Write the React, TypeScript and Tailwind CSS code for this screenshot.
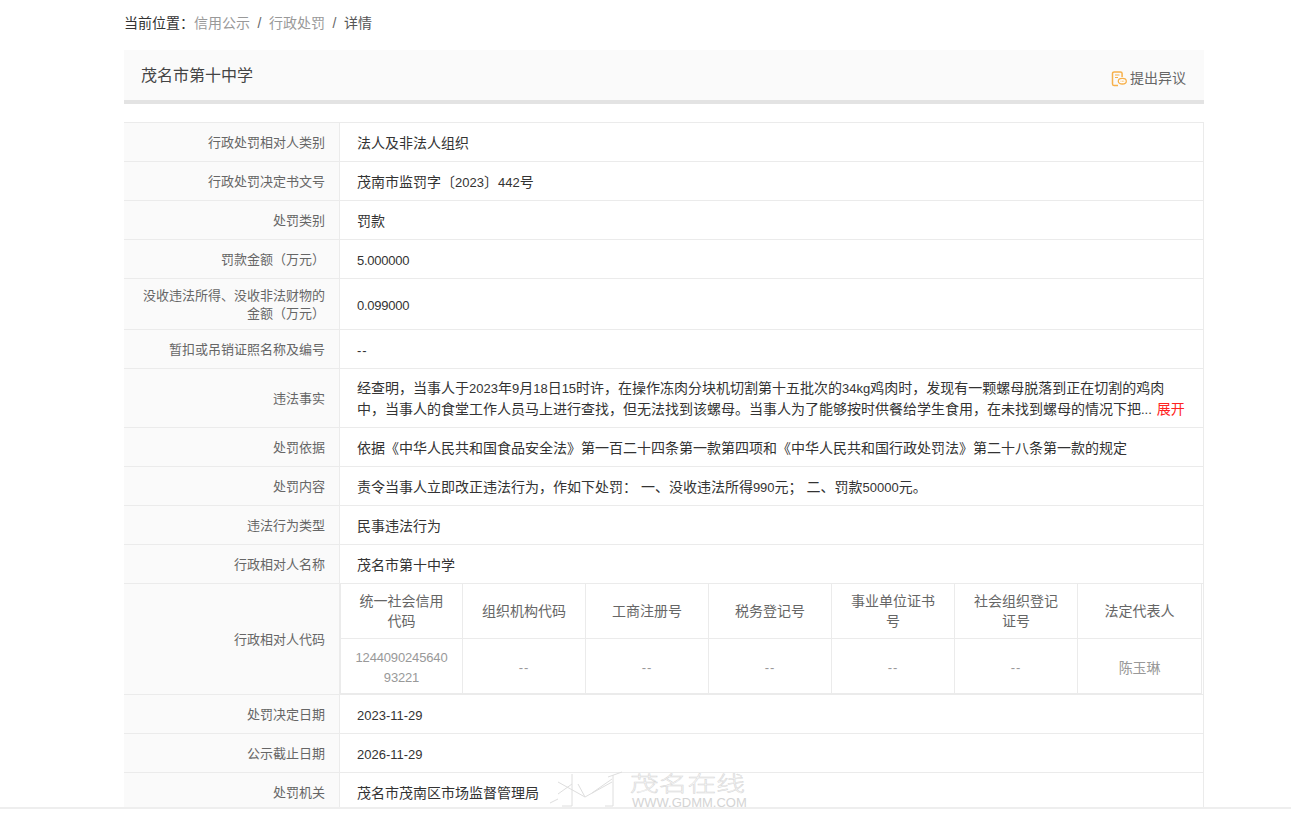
const rowsA: [string, string, string][] = [
  ["行政处罚相对人类别", "法人及非法人组织", "h-[39px]"],
  ["行政处罚决定书文号", "茂南市监罚字〔2023〕442号", "h-[39px]"],
  ["处罚类别", "罚款", "h-[39px]"],
  ["罚款金额（万元）", "5.000000", "h-[39px]"],
  ["没收违法所得、没收非法财物的金额（万元）", "0.099000", "h-[51px]"],
  ["暂扣或吊销证照名称及编号", "--", "h-[39px]"],
];
const rowsB: [string, string][] = [
  ["处罚依据", "依据《中华人民共和国食品安全法》第一百二十四条第一款第四项和《中华人民共和国行政处罚法》第二十八条第一款的规定"],
  ["处罚内容", "责令当事人立即改正违法行为，作如下处罚： 一、没收违法所得990元； 二、罚款50000元。"],
  ["违法行为类型", "民事违法行为"],
  ["行政相对人名称", "茂名市第十中学"],
];
const rowsC: [string, string][] = [
  ["处罚决定日期", "2023-11-29"],
  ["公示截止日期", "2026-11-29"],
  ["处罚机关", "茂名市茂南区市场监督管理局"],
];
const heads = ["统一社会信用代码", "组织机构代码", "工商注册号", "税务登记号", "事业单位证书号", "社会组织登记证号", "法定代表人"];
const vals = ["124409024564093221", "--", "--", "--", "--", "--", "陈玉琳"];

function T({ s }: { s: string }) {
  const parts = s.split(/([0-9A-Za-z.\-]+)/);
  return (
    <>
      {parts.map((p, i) => {
        if (i % 2 === 0) return <span key={i}>{p}</span>;
        let cls = "text-[13px]";
        if (p.includes(".")) cls = "text-[13px] tracking-[-0.25px]";
        if (p === "--") cls = "text-[13px] tracking-[1px]";
        return <span key={i} className={cls}>{p}</span>;
      })}
    </>
  );
}

function Row({ label, cls, children }: { label: string; cls: string; children: React.ReactNode }) {
  return (
    <div className={`flex border-b border-[#ebebeb] ${cls}`}>
      <div className="w-[216px] shrink-0 bg-[#fafafa] border-r border-[#ebebeb] flex items-center justify-end text-right pl-4 pr-[14px] pt-[2px] text-[13px] leading-[18px] text-[#666]">
        <span>{label}</span>
      </div>
      <div className="flex-1 min-w-0 flex items-center pl-[17px] pr-4 pt-[2px] text-[14px] leading-[20px] text-[#333]">{children}</div>
    </div>
  );
}

export default function App() {
  return (
    <div className="relative h-[814px] w-[1291px] overflow-hidden bg-white font-['Liberation_Sans','Noto_Sans_CJK_SC',sans-serif]">
      <div className="ml-[124px] w-[1080px]">
        <div className="h-[50px] pt-[13px] text-[14px] leading-[20px] flex">
          <span className="text-[#333] w-[70px]">当前位置：</span>
          <span className="text-[#999]">信用公示</span>
          <span className="text-[#666] w-[19px] text-center">/</span>
          <span className="text-[#999]">行政处罚</span>
          <span className="text-[#666] w-[19px] text-center">/</span>
          <span className="text-[#555]">详情</span>
        </div>
        <div className="h-[54px] bg-[#fafafa] border-b-4 border-[#e3e3e3] flex items-center justify-between pl-[17px] pr-[18px]">
          <span className="text-[16px] text-[#444] mt-[2px]">茂名市第十中学</span>
          <span className="flex items-center gap-[3px] text-[14px] text-[#666] mt-[7px]">
            <svg width="16" height="16" viewBox="0 0 16 16" fill="none" stroke="#f7b04a" strokeWidth="1.5">
              <path d="M7 14.6H3.2A1.7 1.7 0 0 1 1.5 13V2.6A1.7 1.7 0 0 1 3.2.9h6.2a1.7 1.7 0 0 1 1.7 1.7V6" />
              <path d="M4 4h4.5M4 6.5h3" strokeWidth="1" />
              <ellipse cx="11.3" cy="10.2" rx="4" ry="2.8" fill="#fff" strokeWidth="1.3" />
              <path d="M9.6 10.2h.8M11 10.2h.8M12.4 10.2h.8" strokeWidth="1" />
            </svg>
            提出异议
          </span>
        </div>
        <div className="mt-[18px] border-r border-t border-[#ebebeb]">
          {rowsA.map(([l, v, c]) => (
            <Row key={l} label={l} cls={c}><span><T s={v} /></span></Row>
          ))}
          <Row label="违法事实" cls="h-[59px]">
            <div>
              <T s="经查明，当事人于2023年9月18日15时许，在操作冻肉分块机切割第十五批次的34kg鸡肉时，发现有一颗螺母脱落到正在切割的鸡肉" />
              <br />
              <T s="中，当事人的食堂工作人员马上进行查找，但无法找到该螺母。当事人为了能够按时供餐给学生食用，在未找到螺母的情况下把" />
              <span className="text-[13px]">...</span> <span className="text-[#f22] ml-px">展开</span>
            </div>
          </Row>
          {rowsB.map(([l, v]) => (
            <Row key={l} label={l} cls="h-[39px]"><span><T s={v} /></span></Row>
          ))}
          <div className="flex border-b border-[#ebebeb] h-[111px]">
            <div className="w-[216px] shrink-0 bg-[#fafafa] border-r border-[#ebebeb] flex items-center justify-end pr-[14px] pt-[2px] text-[13px] text-[#666]">行政相对人代码</div>
            <div className="flex-1 min-w-0">
              <div className="grid grid-cols-[122px_repeat(5,123px)_124px] w-[862px] border-l border-b border-[#ebebeb]">
                {heads.map((h) => (
                  <div key={h} className="h-[55px] border-r border-b border-[#ebebeb] flex items-center justify-center text-center px-[15px] text-[14px] leading-[20px] text-[#666]">{h}</div>
                ))}
                {vals.map((v, i) => (
                  <div key={i} className="h-[54px] border-r border-[#ebebeb] flex items-center justify-center text-center px-[14px] pt-[3px] text-[13px] tracking-[-0.15px] leading-[20px] text-[#999] break-all">
                    {v === "陈玉琳" ? <span className="text-[14px]">{v}</span> : v === "--" ? <span className="tracking-[1px]">{v}</span> : v}
                  </div>
                ))}
              </div>
            </div>
          </div>
          {rowsC.map(([l, v]) => (
            <Row key={l} label={l} cls="h-[39px]"><span><T s={v} /></span></Row>
          ))}
        </div>
      </div>
      <div className="absolute left-0 right-0 top-[807px] h-[7px] bg-white border-t-2 border-[#eeeeee]" />
      <div className="absolute left-[548px] top-[770px] w-[200px] h-[44px] pointer-events-none">
        <svg className="absolute left-0 top-0" width="76" height="40" viewBox="0 0 76 40" fill="none" stroke="#dedede" strokeWidth="1">
          <path d="M24 4v32M65 5v31M10 12l27 15 27-15M24 14L10 24M37 27l-7-13M44 23l20-14M60 7l14-5M2 33l8-4M14 36h10M65 36h-8" />
        </svg>
        <span className="absolute left-[82px] top-[1px] text-[21px] leading-[26px] font-light text-white [-webkit-text-stroke:0.5px_#d6d6d6] whitespace-nowrap origin-left scale-x-[1.37]">茂名在线</span>
        <span className="absolute left-[84px] top-[27px] text-[13px] leading-[11px] text-[#d4d4d4] whitespace-nowrap">WWW.GDMM.COM</span>
      </div>
    </div>
  );
}
